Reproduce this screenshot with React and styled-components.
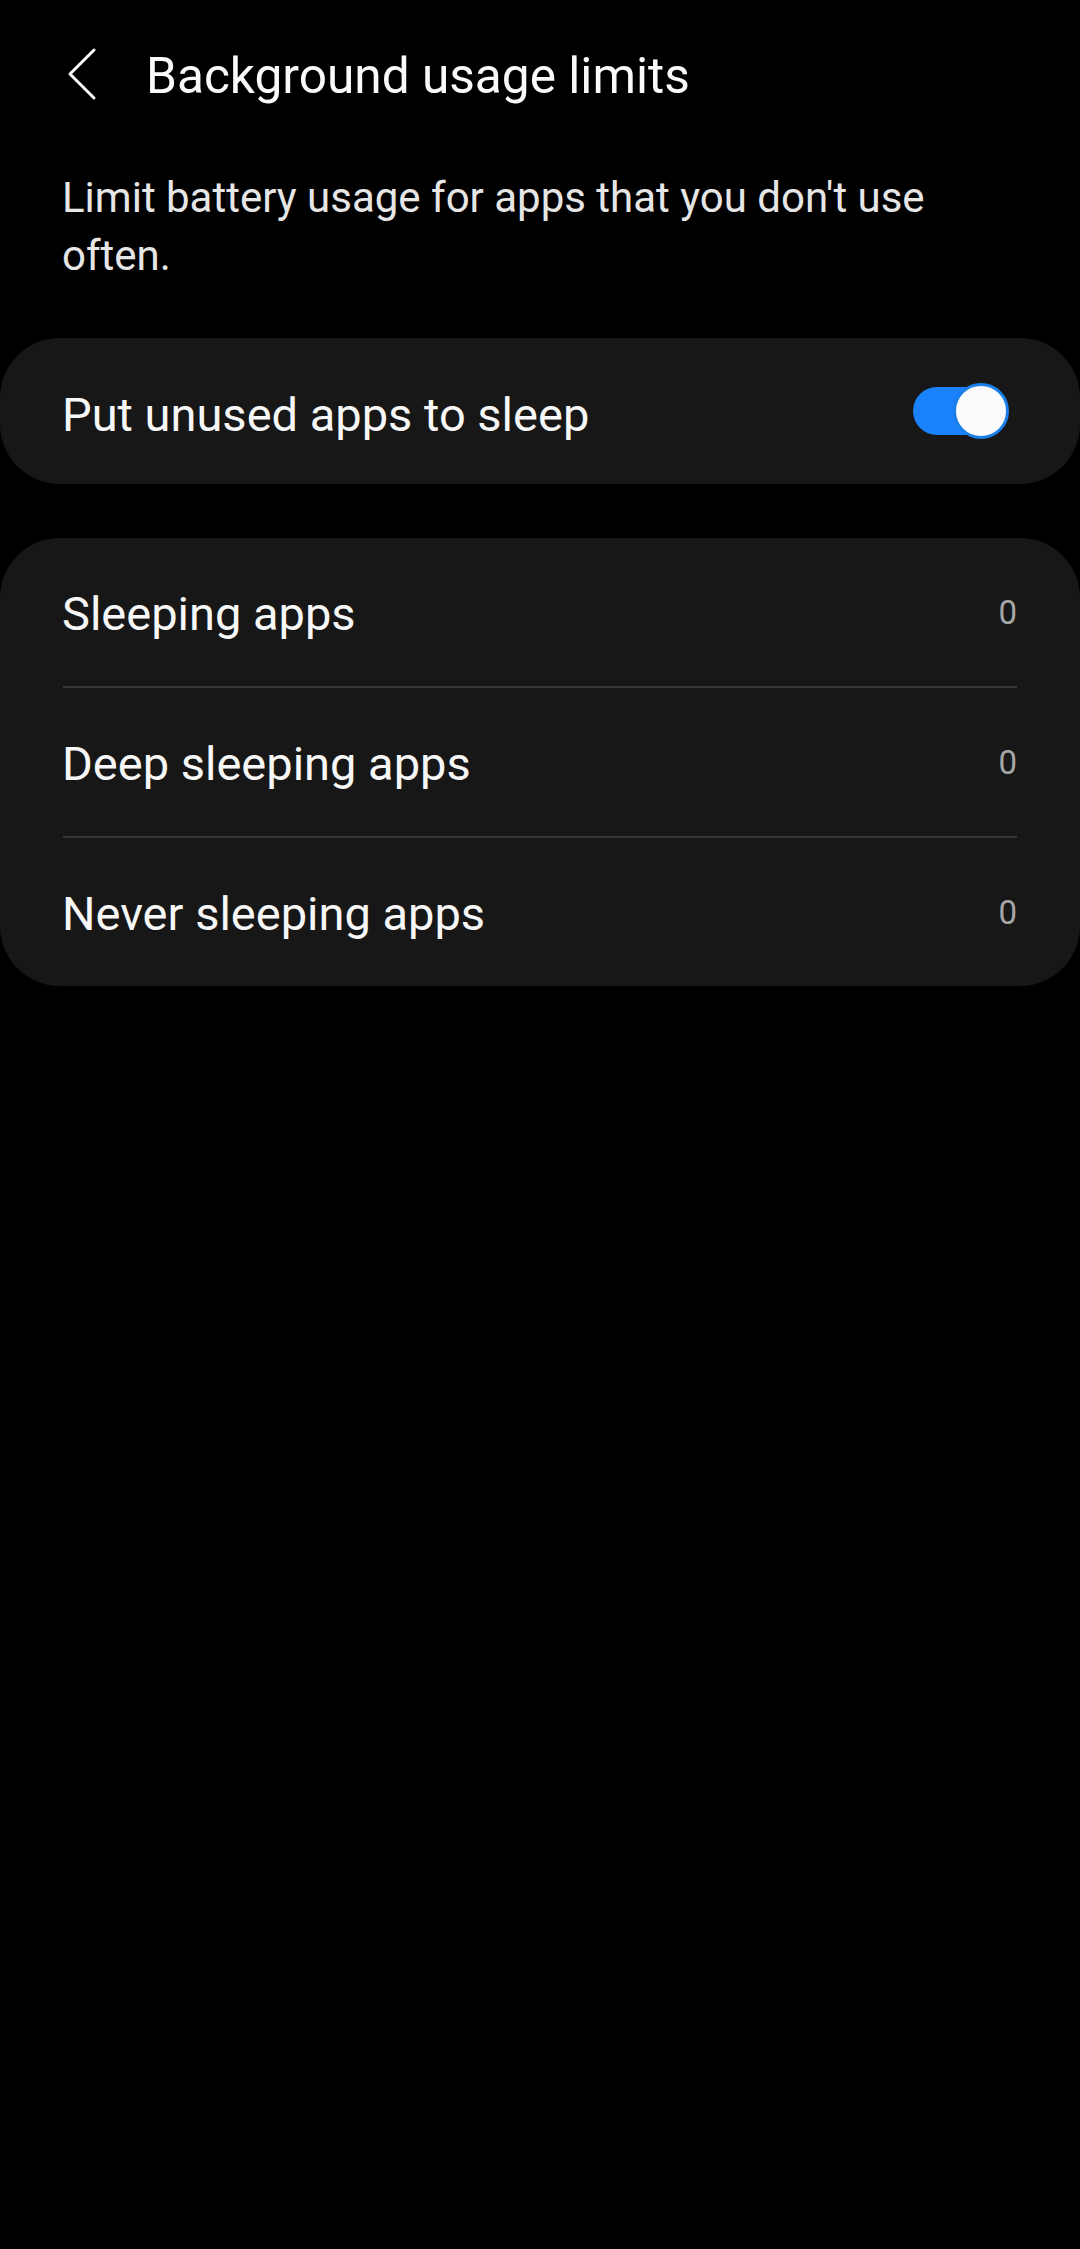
import React from "react";
import styled, { createGlobalStyle } from "styled-components";

const GlobalStyle = createGlobalStyle`
  html, body {
    margin: 0;
    padding: 0;
    background: #000;
  }
  body {
    font-family: Roboto, "Noto Sans", "Liberation Sans", sans-serif;
    -webkit-font-smoothing: antialiased;
  }
`;

const Screen = styled.div`
  width: 1080px;
  min-height: 2249px;
  background: #000;
  color: #fafafa;
  display: flex;
  flex-direction: column;
`;

const Header = styled.header`
  height: 148px;
  display: flex;
  align-items: center;
  gap: 48px;
  padding-left: 66px;
  box-sizing: border-box;
`;

const BackButton = styled.button`
  width: 32px;
  height: 56px;
  padding: 0;
  border: none;
  background: transparent;
  display: flex;
  align-items: center;
  justify-content: center;
  cursor: pointer;
`;

const Title = styled.h1`
  margin: 0;
  padding-top: 5px;
  font-size: 49.6px;
  line-height: 1;
  font-weight: 400;
  color: #fafafa;
`;

const Description = styled.p`
  margin: 21px 0 0;
  padding: 0 62px;
  font-size: 42px;
  line-height: 58px;
  font-weight: 400;
  color: #e6e6e6;
`;

const Card = styled.section`
  background: #171717;
  border-radius: 60px;
  margin-top: ${(p) => p.$top}px;
  display: flex;
  flex-direction: column;
`;

const SwitchRow = styled.div`
  height: 146px;
  padding: 0 62px;
  display: flex;
  align-items: center;
  justify-content: space-between;
`;

const Row = styled.div`
  height: 148px;
  padding: 0 63px 0 62px;
  display: flex;
  align-items: center;
  justify-content: space-between;
`;

const Divider = styled.div`
  height: 2px;
  margin: 0 63px;
  background: #363636;
`;

const Label = styled.span`
  padding-top: ${(p) => p.$shift || 2}px;
  font-size: 47px;
  font-weight: 400;
  color: #f7f7f7;
`;

const Count = styled.span`
  font-size: 33px;
  font-weight: 400;
  color: #a6a6a6;
`;

const Toggle = styled.div`
  position: relative;
  width: 96px;
  height: 56px;
  margin-right: 9px;
  display: flex;
  align-items: center;
`;

const Track = styled.div`
  width: 88px;
  height: 48px;
  border-radius: 24px;
  background: ${(p) => (p.$on ? "#1a82fb" : "#5a5a5a")};
`;

const Thumb = styled.div`
  position: absolute;
  top: 0;
  left: ${(p) => (p.$on ? "40px" : "0")};
  width: 56px;
  height: 56px;
  box-sizing: border-box;
  border-radius: 50%;
  background: #fbfbfb;
  border: 3px solid #1a7fe8;
`;

const items = [
  { label: "Sleeping apps", count: 0 },
  { label: "Deep sleeping apps", count: 0 },
  { label: "Never sleeping apps", count: 0 },
];

export default function App() {
  return (
    <>
      <GlobalStyle />
      <Screen>
        <Header>
          <BackButton aria-label="Back">
            <svg width="32" height="56" viewBox="0 0 32 56" fill="none">
              <path
                d="M28 4 L4 28 L28 52"
                stroke="#fafafa"
                strokeWidth="3"
                strokeLinecap="round"
                strokeLinejoin="round"
              />
            </svg>
          </BackButton>
          <Title>Background usage limits</Title>
        </Header>
        <Description>
          Limit battery usage for apps that you don't use often.
        </Description>
        <Card $top={53}>
          <SwitchRow>
            <Label $shift={6}>Put unused apps to sleep</Label>
            <Toggle>
              <Track $on />
              <Thumb $on />
            </Toggle>
          </SwitchRow>
        </Card>
        <Card $top={54}>
          {items.map((it, i) => (
            <React.Fragment key={it.label}>
              {i > 0 && <Divider />}
              <Row>
                <Label>{it.label}</Label>
                <Count>{it.count}</Count>
              </Row>
            </React.Fragment>
          ))}
        </Card>
      </Screen>
    </>
  );
}
